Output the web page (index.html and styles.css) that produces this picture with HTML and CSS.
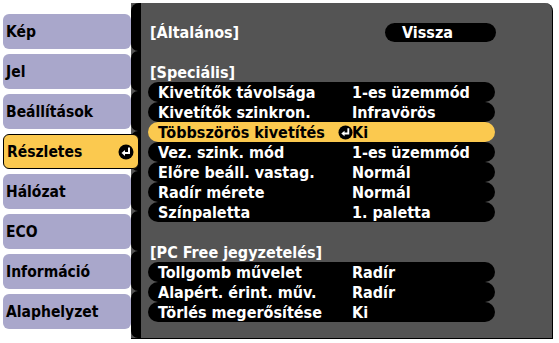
FILE: index.html
```html
<!DOCTYPE html>
<html>
<head>
  <title>Részletes</title>
  <link rel="stylesheet" href="styles.css">
</head>
<body>
  <div class="screen">
    <div class="tabs">
      <div class="tab">Kép</div>
      <div class="tab">Jel</div>
      <div class="tab">Beállítások</div>
      <div class="tab active">
        <span>Részletes</span>
        <svg class="enter" width="16" height="16" viewBox="0 0 16 16">
          <circle cx="8" cy="8" r="7.5" fill="#000"/>
          <path d="M11 3.5 V9 H6" fill="none" stroke="#fff" stroke-width="2"/>
          <polygon points="3.5,9 7,6 7,12" fill="#fff"/>
        </svg>
      </div>
      <div class="tab">Hálózat</div>
      <div class="tab">ECO</div>
      <div class="tab">Információ</div>
      <div class="tab">Alaphelyzet</div>
    </div>

    <div class="panel">
      <div class="strip">
        <div class="seg first"></div>
        <div class="seg"></div>
        <div class="seg"></div>
        <div class="seg"></div>
        <div class="seg"></div>
        <div class="seg"></div>
        <div class="seg"></div>
        <div class="seg last"></div>
      </div>

      <div class="content">
        <div class="line head top">
          <span>[Általános]</span>
          <span class="back">Vissza</span>
        </div>
        <div class="line"></div>

        <div class="line head">[Speciális]</div>
        <div class="line row"><span class="label">Kivetítők távolsága</span><span>1-es üzemmód</span></div>
        <div class="line row"><span class="label">Kivetítők szinkron.</span><span>Infravörös</span></div>
        <div class="line row selected">
          <span class="label">Többszörös kivetítés
            <svg class="enter small" width="15" height="15" viewBox="0 0 16 16">
              <circle cx="8" cy="8" r="7.5" fill="#000"/>
              <path d="M11 3.5 V9 H6" fill="none" stroke="#fff" stroke-width="2"/>
              <polygon points="3.5,9 7,6 7,12" fill="#fff"/>
            </svg>
          </span><span>Ki</span>
        </div>
        <div class="line row"><span class="label">Vez. szink. mód</span><span>1-es üzemmód</span></div>
        <div class="line row"><span class="label">Előre beáll. vastag.</span><span>Normál</span></div>
        <div class="line row"><span class="label">Radír mérete</span><span>Normál</span></div>
        <div class="line row"><span class="label">Színpaletta</span><span>1. paletta</span></div>
        <div class="line"></div>

        <div class="line head">[PC Free jegyzetelés]</div>
        <div class="line row"><span class="label">Tollgomb művelet</span><span>Radír</span></div>
        <div class="line row"><span class="label">Alapért. érint. műv.</span><span>Radír</span></div>
        <div class="line row"><span class="label">Törlés megerősítése</span><span>Ki</span></div>
      </div>
    </div>
  </div>
</body>
</html>
```

FILE: styles.css
```css
/* Projector menu */

body {
  margin: 0;
  background-color: #fff;
  font-family: "DejaVu Sans Condensed", "DejaVu Sans", sans-serif;
  font-weight: bold;
}

.screen {
  display: flex;
  width: 559px;
  height: 343px;
}

.tabs {
  width: 128px;
  margin-left: 3px;
  padding-top: 14px;
  display: flex;
  flex-direction: column;
  gap: 5px;
}

.tab {
  height: 35px;
  box-sizing: border-box;
  padding-left: 3px;
  display: flex;
  align-items: center;
  background-color: #a9a7cb;
  border-radius: 6px;
  font-size: 15.5px;
  color: #000;
}

.tab.active {
  position: relative;
  z-index: 1;
  margin-right: -8px;
  padding-right: 4px;
  justify-content: space-between;
  background-color: #fbc94f;
  border: 1px solid #000;
}

.panel {
  margin-top: 3px;
  width: 421px;
  height: 335px;
  display: flex;
  background-color: #545454;
  border-right: 1px solid #000;
  border-bottom: 1px solid #000;
  border-top-right-radius: 8px;
}

.strip {
  width: 10px;
  display: flex;
  flex-direction: column;
}

.seg {
  height: 40px;
  background-color: #000;
  border-radius: 7px 0 0 7px;
}

.seg.first {
  height: 48px;
  border-radius: 8px 0 0 7px;
}

.seg.last {
  flex: 1;
}

.content {
  padding-left: 7px;
  padding-top: 19px;
  color: #fff;
  font-size: 16px;
}

.line {
  height: 20px;
  display: flex;
  align-items: center;
}

.head {
  padding-left: 2px;
}

.head.top {
  width: 346px;
  justify-content: space-between;
}

.back {
  width: 111px;
  height: 19px;
  box-sizing: border-box;
  padding-left: 17px;
  display: flex;
  align-items: center;
  background-color: #000;
  border-radius: 10px;
}

.row {
  width: 347px;
  background-color: #000;
  border-radius: 10px;
}

.row .label {
  width: 194px;
  padding-left: 10px;
  display: flex;
  align-items: center;
  justify-content: space-between;
}

.row.selected {
  background-color: #fbc94f;
  color: #000;
}

.enter.small {
  margin-right: -1px;
}
```
